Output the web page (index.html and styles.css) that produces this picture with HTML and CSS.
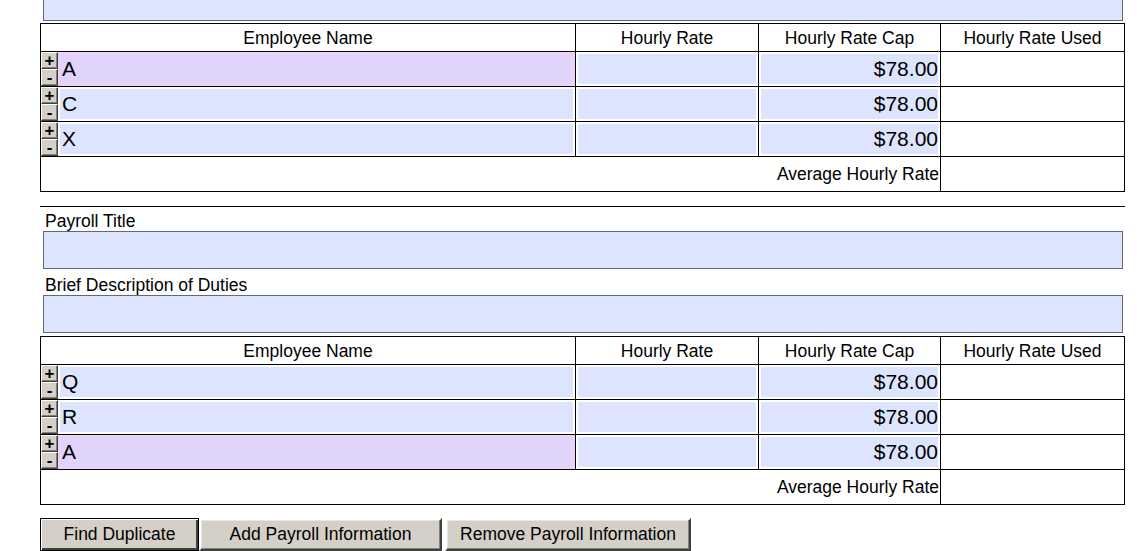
FILE: index.html
```html
<!DOCTYPE html>
<html>
<head>
<meta charset="utf-8">
<title>Payroll Information</title>
<link rel="stylesheet" href="styles.css">
</head>
<body>
<div class="page">
  <div class="field field-top"></div>

  <table class="grid">
    <colgroup><col class="c1"><col class="c2"><col class="c3"><col class="c4"></colgroup>
    <tr class="head"><th>Employee Name</th><th>Hourly Rate</th><th>Hourly Rate Cap</th><th>Hourly Rate Used</th></tr>
    <tr class="row">
      <td><div class="namecell"><div class="pm"><button class="pmb">+</button><button class="pmb minus">-</button></div><div class="in dup">A</div></div></td>
      <td><div class="in"></div></td>
      <td><div class="in num">$78.00</div></td>
      <td></td>
    </tr>
    <tr class="row">
      <td><div class="namecell"><div class="pm"><button class="pmb">+</button><button class="pmb minus">-</button></div><div class="in">C</div></div></td>
      <td><div class="in"></div></td>
      <td><div class="in num">$78.00</div></td>
      <td></td>
    </tr>
    <tr class="row">
      <td><div class="namecell"><div class="pm"><button class="pmb">+</button><button class="pmb minus">-</button></div><div class="in">X</div></div></td>
      <td><div class="in"></div></td>
      <td><div class="in num">$78.00</div></td>
      <td></td>
    </tr>
    <tr class="foot"><td colspan="3" class="avg">Average Hourly Rate</td><td></td></tr>
  </table>

  <div class="rule"></div>

  <div class="label first">Payroll Title</div>
  <div class="field"></div>
  <div class="label">Brief Description of Duties</div>
  <div class="field"></div>

  <table class="grid second">
    <colgroup><col class="c1"><col class="c2"><col class="c3"><col class="c4"></colgroup>
    <tr class="head"><th>Employee Name</th><th>Hourly Rate</th><th>Hourly Rate Cap</th><th>Hourly Rate Used</th></tr>
    <tr class="row">
      <td><div class="namecell"><div class="pm"><button class="pmb">+</button><button class="pmb minus">-</button></div><div class="in">Q</div></div></td>
      <td><div class="in"></div></td>
      <td><div class="in num">$78.00</div></td>
      <td></td>
    </tr>
    <tr class="row">
      <td><div class="namecell"><div class="pm"><button class="pmb">+</button><button class="pmb minus">-</button></div><div class="in">R</div></div></td>
      <td><div class="in"></div></td>
      <td><div class="in num">$78.00</div></td>
      <td></td>
    </tr>
    <tr class="row">
      <td><div class="namecell"><div class="pm"><button class="pmb">+</button><button class="pmb minus">-</button></div><div class="in dup">A</div></div></td>
      <td><div class="in"></div></td>
      <td><div class="in num">$78.00</div></td>
      <td></td>
    </tr>
    <tr class="foot"><td colspan="3" class="avg">Average Hourly Rate</td><td></td></tr>
  </table>

  <div class="actions">
    <button class="btn btn-find">Find Duplicate</button><button class="btn btn-add">Add Payroll Information</button><button class="btn btn-remove">Remove Payroll Information</button>
  </div>
</div>
</body>
</html>
```

FILE: styles.css
```css
html, body {
  margin: 0;
  padding: 0;
  background: #fff;
}
body {
  font-family: "Liberation Sans", Arial, sans-serif;
  font-size: 17.5px;
  color: #000;
  overflow: hidden;
}
.page {
  margin-left: 40px;
  width: 1085px;
}
.field {
  box-sizing: border-box;
  height: 38px;
  margin: 0 2px 0 3px;
  background: #dde4fd;
  border: 1px solid #646876;
}
.field-top {
  margin-top: -17px;
}
.grid {
  border-collapse: collapse;
  table-layout: fixed;
  width: 1084px;
  margin-top: 2px;
}
.grid.second {
  margin-top: 3px;
}
.c1 { width: 535px; }
.c2 { width: 183px; }
.c3 { width: 182px; }
.c4 { width: 184px; }
.grid th, .grid td {
  border: 1px solid #000;
  padding: 0;
}
.grid th {
  font-weight: normal;
  text-align: center;
  height: 27px;
  line-height: 20px;
  vertical-align: middle;
}
.row td {
  height: 34px;
  vertical-align: top;
}
.foot td {
  height: 34px;
}
.avg {
  text-align: right;
  padding-right: 1px !important;
  vertical-align: middle;
}
.namecell {
  display: flex;
  height: 34px;
}
.pm {
  width: 17px;
  display: flex;
  flex-direction: column;
}
.pmb {
  box-sizing: border-box;
  display: block;
  width: 17px;
  height: 17px;
  margin: 0;
  padding: 0;
  background: #d4d0c8;
  border: 1px solid;
  border-color: #fff #404040 #404040 #fff;
  box-shadow: inset -1px -1px #808080;
  font-family: "Liberation Sans", Arial, sans-serif;
  font-weight: bold;
  font-size: 17px;
  line-height: 15px;
  color: #000;
  text-align: center;
}
.in {
  box-sizing: border-box;
  flex: 1;
  height: 34px;
  background: #dde4fd;
  border: 2px solid #fff;
  padding: 0 2px;
  font-size: 21px;
  line-height: 29px;
}
.in.dup {
  background: #e0d4fb;
  border-color: #f2d0f7;
}
.in.num {
  text-align: right;
  padding-right: 0;
}
.rule {
  height: 1px;
  background: #000;
  margin-top: 14px;
}
.label {
  height: 19px;
  line-height: 19px;
  padding-left: 5px;
  margin-top: 7px;
}
.label.first {
  margin-top: 5px;
}
.actions {
  margin-top: 13px;
  display: flex;
}
.btn {
  box-sizing: border-box;
  height: 33px;
  margin: 0;
  padding: 0;
  background: #d4d0c8;
  border: 2px solid;
  border-color: #fff #404040 #404040 #fff;
  box-shadow: inset -1px -1px #808080, inset 1px 1px #e8e6e0;
  font-family: "Liberation Sans", Arial, sans-serif;
  font-size: 17.5px;
  color: #000;
  text-align: center;
}
.btn-find {
  width: 159px;
  border: 1px solid #000;
  box-shadow: inset 1px 1px #fff, inset -2px -2px #404040;
  outline: 1px dotted #000;
  outline-offset: -1px;
}
.btn-add {
  width: 243px;
}
.btn-remove {
  width: 246px;
  margin-left: 3px;
}
```
